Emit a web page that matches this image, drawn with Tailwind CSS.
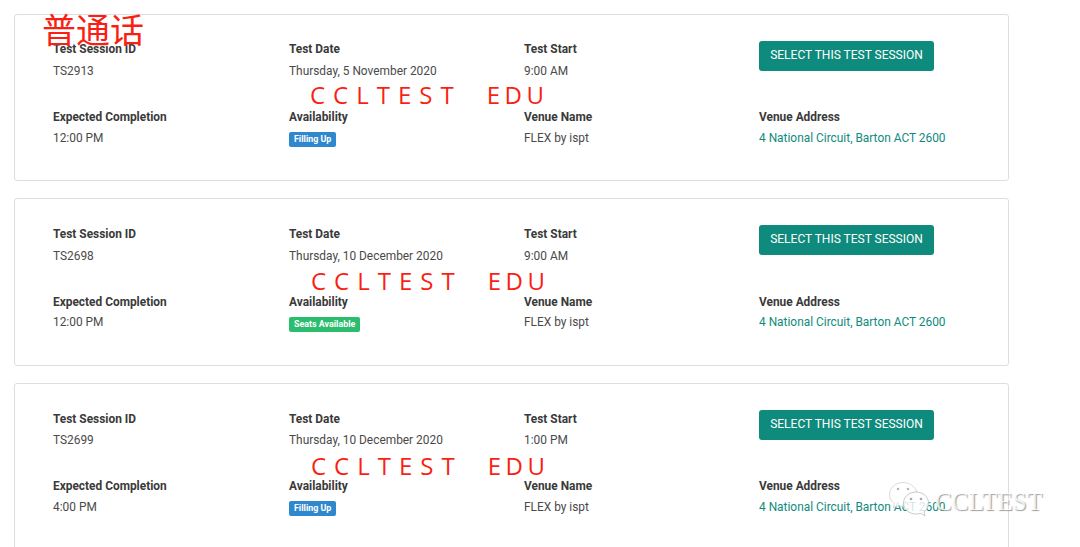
<!DOCTYPE html>
<html lang="zh">
<head>
  <meta charset="UTF-8">
  <title>Test Sessions</title>
  <script src="https://cdn.jsdelivr.net/npm/@tailwindcss/browser@4"></script>
</head>
<body class="bg-white text-[#4a4a4a] font-['Roboto',sans-serif] text-[11.9px] h-[547px] w-[1080px] overflow-hidden relative">

  <div class="pl-[14px] pt-[14px] w-[1008.5px] flex flex-col">

    <!-- Session 1 -->
    <div class="border border-[#dedede] rounded-[3px] h-[167px] mb-[17px] pl-[38px] pt-[27px] grid grid-cols-[236px_235px_235px_235px] grid-rows-[68px_auto] shrink-0">
      <div>
        <div class="font-bold text-[#3a3a3a] leading-[14px]">Test Session ID</div>
        <div class="mt-[8px] leading-[14px]">TS2913</div>
      </div>
      <div>
        <div class="font-bold text-[#3a3a3a] leading-[14px]">Test Date</div>
        <div class="mt-[8px] leading-[14px]">Thursday, 5 November 2020</div>
      </div>
      <div>
        <div class="font-bold text-[#3a3a3a] leading-[14px]">Test Start</div>
        <div class="mt-[8px] leading-[14px]">9:00 AM</div>
      </div>
      <div>
        <button class="block bg-[#0f8b7d] text-white rounded-[3px] h-[30px] w-[175px] -mt-[1px] text-[12px] leading-[27px] pb-[2px]">SELECT THIS TEST SESSION</button>
      </div>
      <div>
        <div class="font-bold text-[#3a3a3a] leading-[14px]">Expected Completion</div>
        <div class="mt-[7px] leading-[14px]">12:00 PM</div>
      </div>
      <div>
        <div class="font-bold text-[#3a3a3a] leading-[14px]">Availability</div>
        <span class="inline-block mt-[8px] bg-[#2f88cd] text-white rounded-[2px] h-[15px] px-[5px] text-[8.9px] font-bold leading-[14px] align-top">Filling Up</span>
      </div>
      <div>
        <div class="font-bold text-[#3a3a3a] leading-[14px]">Venue Name</div>
        <div class="mt-[7px] leading-[14px]">FLEX by ispt</div>
      </div>
      <div>
        <div class="font-bold text-[#3a3a3a] leading-[14px]">Venue Address</div>
        <a href="#" class="block mt-[7px] leading-[14px] text-[#0f8b7d]">4 National Circuit, Barton ACT 2600</a>
      </div>
    </div>

    <!-- Session 2 -->
    <div class="border border-[#dedede] rounded-[3px] h-[168px] mb-[17px] pl-[38px] pt-[27px] grid grid-cols-[236px_235px_235px_235px] grid-rows-[68px_auto] shrink-0">
      <div>
        <div class="font-bold text-[#3a3a3a] leading-[14px] pt-[1px]">Test Session ID</div>
        <div class="mt-[8px] leading-[14px]">TS2698</div>
      </div>
      <div>
        <div class="font-bold text-[#3a3a3a] leading-[14px] pt-[1px]">Test Date</div>
        <div class="mt-[8px] leading-[14px]">Thursday, 10 December 2020</div>
      </div>
      <div>
        <div class="font-bold text-[#3a3a3a] leading-[14px] pt-[1px]">Test Start</div>
        <div class="mt-[8px] leading-[14px]">9:00 AM</div>
      </div>
      <div>
        <button class="block bg-[#0f8b7d] text-white rounded-[3px] h-[30px] w-[175px] -mt-[1px] text-[12px] leading-[27px] pb-[2px]">SELECT THIS TEST SESSION</button>
      </div>
      <div>
        <div class="font-bold text-[#3a3a3a] leading-[14px] pt-[1px]">Expected Completion</div>
        <div class="mt-[6px] leading-[14px]">12:00 PM</div>
      </div>
      <div>
        <div class="font-bold text-[#3a3a3a] leading-[14px] pt-[1px]">Availability</div>
        <span class="inline-block mt-[8px] bg-[#2bbd6e] text-white rounded-[2px] h-[15px] px-[5px] text-[8.9px] font-bold leading-[14px] align-top">Seats Available</span>
      </div>
      <div>
        <div class="font-bold text-[#3a3a3a] leading-[14px] pt-[1px]">Venue Name</div>
        <div class="mt-[6px] leading-[14px]">FLEX by ispt</div>
      </div>
      <div>
        <div class="font-bold text-[#3a3a3a] leading-[14px] pt-[1px]">Venue Address</div>
        <a href="#" class="block mt-[6px] leading-[14px] text-[#0f8b7d]">4 National Circuit, Barton ACT 2600</a>
      </div>
    </div>

    <!-- Session 3 -->
    <div class="border border-[#dedede] rounded-[3px] h-[167px] pl-[38px] pt-[27px] grid grid-cols-[236px_235px_235px_235px] grid-rows-[68px_auto] shrink-0">
      <div>
        <div class="font-bold text-[#3a3a3a] leading-[14px] pt-[1px]">Test Session ID</div>
        <div class="mt-[7px] leading-[14px]">TS2699</div>
      </div>
      <div>
        <div class="font-bold text-[#3a3a3a] leading-[14px] pt-[1px]">Test Date</div>
        <div class="mt-[7px] leading-[14px]">Thursday, 10 December 2020</div>
      </div>
      <div>
        <div class="font-bold text-[#3a3a3a] leading-[14px] pt-[1px]">Test Start</div>
        <div class="mt-[7px] leading-[14px]">1:00 PM</div>
      </div>
      <div>
        <button class="block bg-[#0f8b7d] text-white rounded-[3px] h-[30px] w-[175px] -mt-[1px] text-[12px] leading-[27px] pb-[2px]">SELECT THIS TEST SESSION</button>
      </div>
      <div>
        <div class="font-bold text-[#3a3a3a] leading-[14px]">Expected Completion</div>
        <div class="mt-[7px] leading-[14px]">4:00 PM</div>
      </div>
      <div>
        <div class="font-bold text-[#3a3a3a] leading-[14px]">Availability</div>
        <span class="inline-block mt-[8px] bg-[#2f88cd] text-white rounded-[2px] h-[15px] px-[5px] text-[8.9px] font-bold leading-[14px] align-top">Filling Up</span>
      </div>
      <div>
        <div class="font-bold text-[#3a3a3a] leading-[14px]">Venue Name</div>
        <div class="mt-[7px] leading-[14px]">FLEX by ispt</div>
      </div>
      <div>
        <div class="font-bold text-[#3a3a3a] leading-[14px]">Venue Address</div>
        <a href="#" class="block mt-[7px] leading-[14px] text-[#0f8b7d]">4 National Circuit, Barton ACT 2600</a>
      </div>
    </div>
  </div>

  <!-- Red overlays on the screenshot -->
  <div class="absolute left-[42px] top-[10px] text-[34px] leading-[38px] text-[#fa1f14] font-['Noto_Sans_CJK_SC',sans-serif]">普通话</div>
  <div class="absolute left-[310px] top-[81px] text-[24px] leading-[28px] text-[#fa1f14] font-['Open_Sans',sans-serif] tracking-[8px] whitespace-pre">CCLTEST<span class="ml-[25px] tracking-[4.500px]">EDU</span></div>
  <div class="absolute left-[311px] top-[267px] text-[24px] leading-[28px] text-[#fa1f14] font-['Open_Sans',sans-serif] tracking-[8px] whitespace-pre">CCLTEST<span class="ml-[25px] tracking-[4.500px]">EDU</span></div>
  <div class="absolute left-[311px] top-[452px] text-[24px] leading-[28px] text-[#fa1f14] font-['Open_Sans',sans-serif] tracking-[8px] whitespace-pre">CCLTEST<span class="ml-[25px] tracking-[4.500px]">EDU</span></div>

  <!-- WeChat watermark -->
  <svg class="absolute left-[888px] top-[481px]" width="50" height="38" viewBox="0 0 50 38">
    <path d="M15 1.500C8 1.500 1.500 6.500 1.500 13.500c0 4 2 7 5 9l-1 4 5-2c2 .6 3 .8 5 .8C16 19 21 12 29 11 27 5.500 21 1.500 15 1.500z" fill="#fff" fill-opacity=".85" stroke="#cfcfcf" stroke-width=".8"/>
    <path d="M28 11c-7 0-12.500 5-12.500 11S21 33 28 33c2 0 3-.2 5-.7l4 2.700-1-4c3-2 4.500-5 4.500-9 0-6-5.500-11-12.500-11z" fill="#fff" fill-opacity=".8" stroke="#bdbdbd" stroke-width=".8"/>
    <circle cx="10" cy="8" r="1.300" fill="#b5b5b5"/>
    <circle cx="20" cy="8" r="1.300" fill="#b5b5b5"/>
    <circle cx="23" cy="18" r="1.300" fill="#a8a8a8"/>
    <circle cx="33" cy="18" r="1.300" fill="#a8a8a8"/>
  </svg>
  <div class="absolute left-[935px] top-[487px] text-[25px] leading-[30px] font-['Liberation_Serif',serif] text-white/80 tracking-[0.2px] [text-shadow:1px_1px_1px_#9a9a9a]">CCLTEST</div>

</body>
</html>
